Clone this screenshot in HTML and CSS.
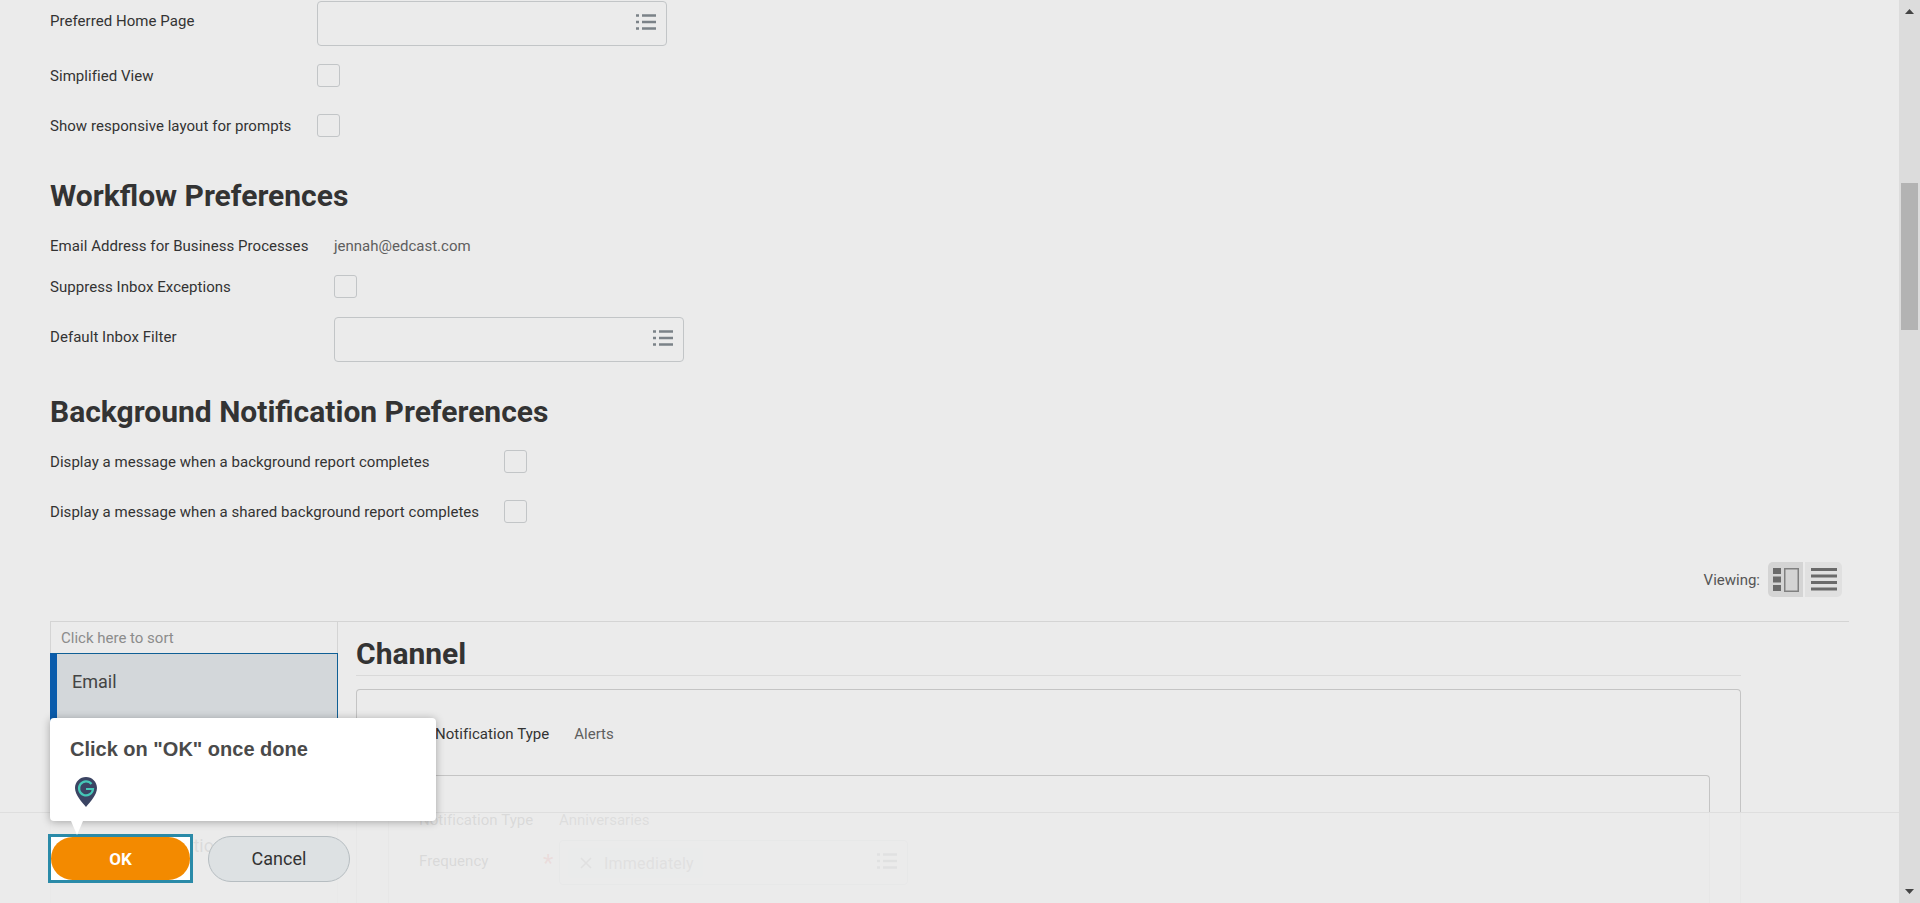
FILE: index.html
```html
<!DOCTYPE html>
<html lang="en">
<head>
<meta charset="utf-8">
<title>Preferences</title>
<link rel="stylesheet" href="styles.css">
</head>
<body>
<div class="app">
  <main class="main">
    <div class="row row-input first">
      <label class="label col-a">Preferred Home Page</label>
      <div class="prompt"><svg class="list-icon" viewBox="0 0 20 16"><path d="M0 1.5h3M6 1.5h14M0 8h3M6 8h14M0 14.5h3M6 14.5h14"/></svg></div>
    </div>
    <div class="row gap-18">
      <label class="label col-a">Simplified View</label>
      <span class="check"></span>
    </div>
    <div class="row gap-27">
      <label class="label col-a">Show responsive layout for prompts</label>
      <span class="check"></span>
    </div>

    <h2 class="heading gap-41">Workflow Preferences</h2>
    <div class="row text-row gap-22">
      <label class="label col-b">Email Address for Business Processes</label>
      <span class="value">jennah@edcast.com</span>
    </div>
    <div class="row gap-19">
      <label class="label col-b">Suppress Inbox Exceptions</label>
      <span class="check"></span>
    </div>
    <div class="row row-input gap-19">
      <label class="label col-b">Default Inbox Filter</label>
      <div class="prompt"><svg class="list-icon" viewBox="0 0 20 16"><path d="M0 1.5h3M6 1.5h14M0 8h3M6 8h14M0 14.5h3M6 14.5h14"/></svg></div>
    </div>

    <h2 class="heading gap-32">Background Notification Preferences</h2>
    <div class="row gap-20">
      <label class="label col-c">Display a message when a background report completes</label>
      <span class="check"></span>
    </div>
    <div class="row gap-27">
      <label class="label col-c">Display a message when a shared background report completes</label>
      <span class="check"></span>
    </div>

    <div class="viewing">
      <span class="viewing-label">Viewing:</span>
      <div class="toggle">
        <span class="seg seg-on">
          <svg viewBox="0 0 26 24" width="26" height="24"><path class="ic-fill" d="M0 0h8v6H0zM0 8.500h8v6H0zM0 17h8v6H0z"/><rect class="ic-line" x="11.750" y="0.750" width="13.500" height="22.500"/></svg>
        </span>
        <span class="seg seg-off">
          <svg viewBox="0 0 26 24" width="26" height="24"><path class="ic-fill" d="M0 0h26v3H0zM0 6.500h26v3H0zM0 13h26v3H0zM0 19.500h26v3H0z"/></svg>
        </span>
      </div>
    </div>

    <div class="split">
      <aside class="list">
        <div class="sort">Click here to sort</div>
        <div class="item item-on">Email</div>
        <div class="item">Mobile Notification</div>
      </aside>
      <section class="detail">
        <h2 class="detail-title">Channel</h2>
        <div class="card">
          <div class="card-head">
            <span class="label">Notification Type</span>
            <span class="value">Alerts</span>
          </div>
          <div class="inner">
            <div class="inner-row">
              <span class="label label-w">Notification Type</span>
              <span class="value">Anniversaries</span>
            </div>
            <div class="inner-row freq">
              <span class="label label-w">Frequency<i class="star">*</i></span>
              <div class="prompt prompt-chip">
                <span class="chip"><svg class="chip-x" viewBox="0 0 12 12"><path d="M1 1l10 10M11 1L1 11"/></svg>Immediately</span>
                <svg class="list-icon" viewBox="0 0 20 16"><path d="M0 1.5h3M6 1.5h14M0 8h3M6 8h14M0 14.5h3M6 14.5h14"/></svg>
              </div>
            </div>
          </div>
        </div>
      </section>
    </div>

    <footer class="footer">
      <span class="ok-ring"><button class="btn btn-ok">OK</button></span>
      <button class="btn btn-cancel">Cancel</button>
    </footer>

    <div class="tip">
      <p class="tip-text">Click on "OK" once done</p>
      <svg class="pin" viewBox="0 0 22 30" width="22" height="30">
        <path class="pin-body" d="M11 0C5 0 0 4.800 0 11c0 7 7 14 11 19 4-5 11-12 11-19C22 4.800 17 0 11 0z"/>
        <path class="pin-g" d="M16.500 7A7 7 0 1 0 18 12H11"/>
      </svg>
      <span class="tip-arrow"></span>
    </div>
  </main>
  <div class="scrollbar">
    <svg class="arrow" viewBox="0 0 9 5" width="9" height="5"><path d="M4.500 0L9 5H0z"/></svg>
    <div class="thumb"></div>
    <svg class="arrow arrow-down" viewBox="0 0 9 5" width="9" height="5"><path d="M0 0h9L4.500 5z"/></svg>
  </div>
</div>
</body>
</html>
```
FILE: styles.css
```css
* { box-sizing: border-box; }
html, body { margin: 0; height: 100%; overflow: hidden; }
body { font-family: Roboto, "Liberation Sans", sans-serif; color: #333; background: #ebebeb; }
.app { display: flex; height: 903px; overflow: hidden; }
.main { flex: 1; min-width: 0; position: relative; overflow: hidden; padding: 1px 50px 0; }

.row { display: flex; align-items: center; }
.row-input { align-items: flex-start; }
.row-input .label { line-height: 20px; padding-top: 10px; }
.text-row { height: 20px; }
.label { font-size: 15px; line-height: 20px; font-weight: 400; color: #333; letter-spacing: .05px; flex: none; }
.col-a { width: 267px; }
.col-b { width: 284px; }
.col-c { width: 454px; }
.value { font-size: 15px; line-height: 20px; color: #5e5e5e; }

.gap-18 { margin-top: 18px; }
.gap-19 { margin-top: 19px; }
.gap-20 { margin-top: 20px; }
.gap-22 { margin-top: 22px; }
.gap-27 { margin-top: 27px; }
.gap-32 { margin-top: 32px; }
.gap-41 { margin-top: 41px; }

.prompt { width: 350px; height: 45px; border: 1px solid #c2c5c7; border-radius: 4px; position: relative; flex: none; }
.list-icon { position: absolute; right: 10px; top: 12px; width: 20px; height: 16px; fill: none; stroke: #7b8288; stroke-width: 2.600; }
.check { width: 23px; height: 23px; border: 1px solid #c2c5c7; border-radius: 3px; flex: none; }
.heading { margin-bottom: 0; font-size: 30px; line-height: 36px; font-weight: 700; color: #333; margin-left: 0; margin-right: 0; }

.viewing { display: flex; justify-content: flex-end; align-items: center; margin-top: 39px; height: 35px; padding-right: 7px; }
.viewing-label { font-size: 15px; color: #555; margin-right: 8px; }
.toggle { display: flex; gap: 2px; width: 74px; height: 35px; border-radius: 5px; overflow: hidden; }
.seg { display: flex; align-items: center; justify-content: center; height: 100%; }
.seg-on { width: 35px; background: #d4d4d4; }
.seg-off { width: 37px; background: #e0e0e0; }
.ic-fill { fill: #6a6a6a; }
.ic-line { fill: none; stroke: #808080; stroke-width: 1.500; }

.split { display: flex; margin-top: 24px; border-top: 1px solid #d4d4d4; gap: 18px; height: 400px; }
.list { width: 288px; flex: none; border-left: 1px solid #d4d4d4; border-right: 1px solid #d4d4d4; }
.sort { height: 31px; padding-left: 10px; font-size: 15px; line-height: 32px; color: #8c8c8c; }
.item { font-size: 18px; line-height: 24px; color: #444; padding: 16px 0 0 22px; height: 60px; margin-left: -1px; margin-right: -1px; }
.item-on { height: 165px; background: #d3d7da; border: 1px solid #0f5f95; border-left: 7px solid #0b5cab; padding: 16px 0 0 15px; }

.detail { width: 1385px; flex: none; }
.detail-title { margin: 14px 0 0; font-size: 30px; line-height: 36px; font-weight: 700; color: #333; border-bottom: 1px solid #d9d9d9; height: 40px; }
.card { margin-top: 13px; border: 1px solid #c4c4c4; border-bottom: 0; border-radius: 4px 4px 0 0; height: 300px; padding: 34px 0 0 31px; }
.card-head { display: flex; gap: 25px; margin-left: 47px; height: 51px; }
.inner { border: 1px solid #c4c4c4; border-bottom: 0; border-radius: 4px 4px 0 0; width: 1322px; height: 250px; padding: 34px 0 0 30px; margin-top: 0; }
.inner-row { display: flex; align-items: flex-start; }
.label-w { width: 140px; position: relative; }
.star { position: absolute; left: 124px; top: 2px; color: #d9534f; font-style: normal; font-size: 24px; }
.freq { margin-top: 10px; }
.freq .label { margin-top: 11px; }
.prompt-chip { width: 349px; }
.chip { position: absolute; left: 8px; top: 7px; width: 135px; height: 30px; background: #e0e3e6; border-radius: 3px; display: flex; align-items: center; font-size: 16px; color: #777; letter-spacing: .2px; padding-left: 12px; gap: 12px; }
.chip-x { width: 12px; height: 12px; fill: none; stroke: #777; stroke-width: 1.500; }

.footer { position: absolute; left: 0; right: 0; top: 812px; height: 91px; background: rgba(235,235,235,.9); border-top: 1px solid #dedede; display: flex; align-items: flex-start; padding: 21px 0 0 48px; gap: 15px; }
.ok-ring { width: 145px; height: 49px; border: 3px solid #2a8aa8; background: #fff; display: flex; flex: none; }
.btn { font-family: Roboto, "Liberation Sans", sans-serif; font-size: 16px; border-radius: 23px; padding: 0; cursor: pointer; }
.btn-ok { width: 139px; height: 43px; border: 0; background: #f38a00; color: #fff; font-weight: 700; font-size: 17px; }
.btn-cancel { width: 142px; height: 46px; margin-top: 2px; padding-bottom: 2px; background: #dde1e3; border: 1px solid #b6bdc1; color: #333; font-weight: 400; font-size: 18px; }

.tip { position: absolute; left: 50px; top: 718px; width: 386px; height: 103px; background: #fff; border-radius: 4px; box-shadow: 0 1px 8px rgba(0,0,0,.3); padding: 20px 20px 0; }
.tip-text { margin: 0; font-family: "Liberation Sans", Arial, sans-serif; font-size: 20px; line-height: 23px; font-weight: 700; color: #4a4a4a; }
.pin { display: block; margin: 16px 0 0 5px; }
.pin-body { fill: #3b4463; }
.pin-g { fill: none; stroke: #45c7b7; stroke-width: 2.200; }
.tip-arrow { position: absolute; left: 21px; top: 103px; width: 0; height: 0; border-left: 6px solid transparent; border-right: 6px solid transparent; border-top: 14px solid #fff; }

.scrollbar { width: 21px; flex: none; background: #dcdcdc; display: flex; flex-direction: column; align-items: center; padding-top: 9px; }
.arrow { fill: #444; flex: none; }
.thumb { width: 17px; height: 147px; margin-top: 169px; background: #b3b3b3; flex: none; }
.arrow-down { margin-top: auto; margin-bottom: 9px; }
```
